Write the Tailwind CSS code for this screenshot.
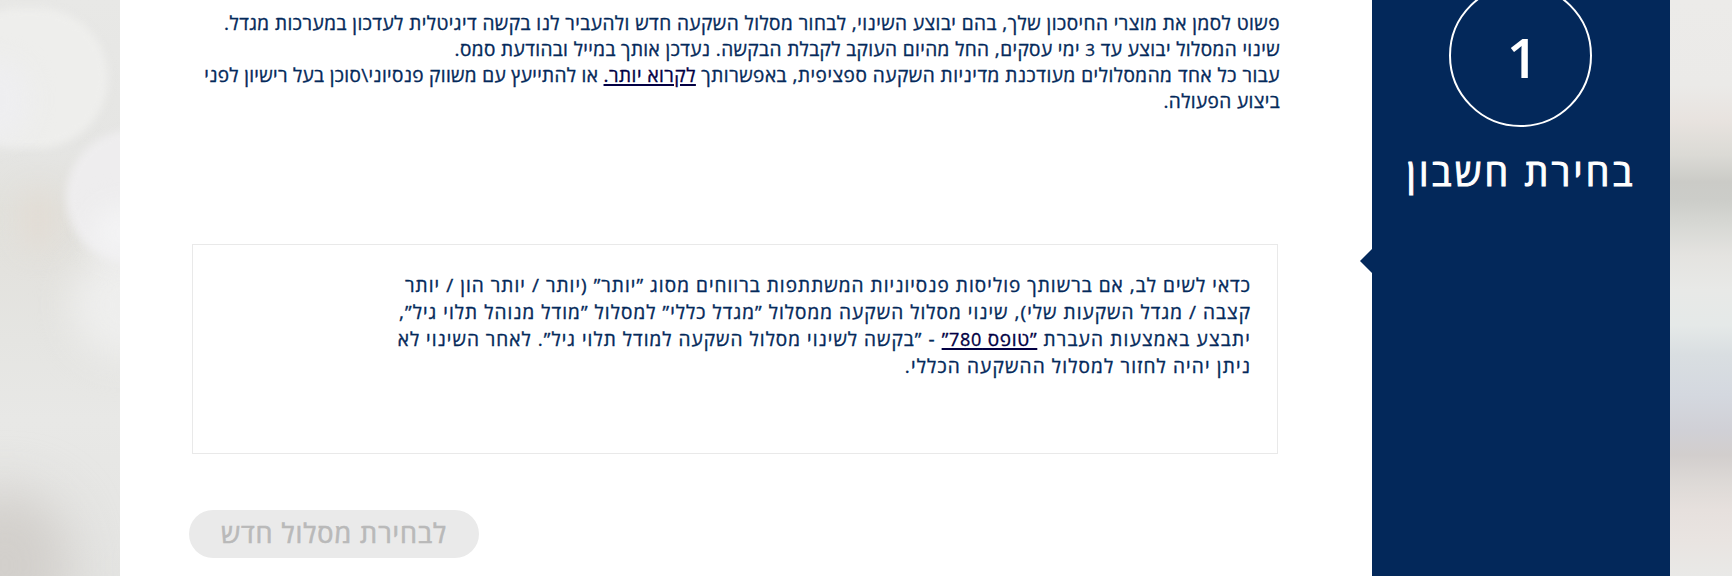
<!doctype html>
<html lang="he" dir="rtl">

<head>
    <meta charset="UTF-8">
    <meta name="viewport" content="width=device-width, initial-scale=1.0">
    <title>בחירת חשבון</title>
    <script src="https://cdn.jsdelivr.net/npm/@tailwindcss/browser@4"></script>
</head>

<body class="h-screen overflow-hidden bg-[#e9e9e7] font-['Open_Sans',sans-serif] text-[#04295a]">
    <div class="flex h-[576px]">
        <!-- right side of the page background -->
        <div class="w-[62px] shrink-0 bg-[linear-gradient(to_bottom,#ecebe9_0px,#ebeae8_85px,#e8e3df_120px,#dbdad5_155px,#cbcbc7_182px,#cccdc9_200px,#d7d8d4_225px,#e4e3e0_255px,#e8e9e7_290px,#e5e9e8_325px,#d9dee1_355px,#d4d8df_395px,#d0d0d6_430px,#d2cecd_455px,#dedad7_485px,#e6e0dd_510px,#e9e4e1_540px,#e9e9e7_576px)]"></div>

        <!-- current step -->
        <aside class="relative flex w-[298px] shrink-0 flex-col items-center bg-[#03285a] text-white">
            <div class="-mt-4 mr-px flex size-[143px] shrink-0 items-center justify-center rounded-full border-2 border-white">
                <span class="pt-0.5 pl-1 text-[55px] leading-none font-semibold">1</span>
            </div>
            <h2 class="mt-[21px] text-[37.5px] leading-[48px] tracking-[3.3px] whitespace-nowrap [-webkit-text-stroke:1px]">בחירת חשבון</h2>
            <svg class="absolute top-[249px] -left-3" width="12" height="24" viewBox="0 0 12 24">
                <path fill="#03285a" d="M12 0L0 12L12 24Z"></path>
            </svg>
        </aside>

        <main class="flex w-[1252px] shrink-0 flex-col bg-white">
            <div class="mt-[10px] mr-[92px] text-[19px] leading-[26px] whitespace-nowrap [-webkit-text-stroke:0.35px]">
                <p class="tracking-[0.47px]">פשוט לסמן את מוצרי החיסכון שלך, בהם יבוצע השינוי, לבחור מסלול השקעה חדש ולהעביר לנו בקשה דיגיטלית לעדכון במערכות מגדל.</p>
                <p class="tracking-[0.41px]">שינוי המסלול יבוצע עד <span class="text-[17px] leading-none">3</span> ימי עסקים, החל מהיום העוקב לקבלת הבקשה. נעדכן אותך במייל ובהודעת סמס.</p>
                <p class="tracking-[0.34px]"><span class="tracking-[0.52px]">עבור כל אחד מהמסלולים מעודכנת מדיניות השקעה ספציפית, באפשרותך </span><a href="#" class="tracking-[0.5px] text-[#020043] underline decoration-2 underline-offset-2">לקרוא יותר.</a> או להתייעץ עם משווק פנסיוני\סוכן בעל רישיון לפני</p>
                <p class="tracking-[0.4px]">ביצוע הפעולה.</p>
            </div>

            <div class="mt-[130px] mr-[94px] h-[210px] w-[1086px] border border-[#e9e9e9] pt-[27px] pr-[26px] text-[19px] leading-[27px] tracking-[1.03px] whitespace-nowrap [-webkit-text-stroke:0.35px]">
                <p class="tracking-[1.05px]">כדאי לשים לב, אם ברשותך פוליסות פנסיוניות המשתתפות ברווחים מסוג ”יותר” (יותר / יותר הון / יותר</p>
                <p class="tracking-[1.05px]">קצבה / מגדל השקעות שלי), שינוי מסלול השקעה ממסלול ”מגדל כללי” למסלול ”מודל מנוהל תלוי גיל”,</p>
                <p class="tracking-[1.04px]"><span class="tracking-[1.22px]">יתבצע באמצעות העברת </span><a href="#" class="tracking-[0.72px] text-[#020043] underline decoration-2 underline-offset-2">”טופס <span class="text-[18px] leading-none">780</span>”</a> - ”בקשה לשינוי מסלול השקעה למודל תלוי גיל”. לאחר השינוי לא</p>
                <p class="tracking-[1.17px]">ניתן יהיה לחזור למסלול ההשקעה הכללי.</p>
            </div>

            <button type="button" disabled class="mt-[56px] mr-[893px] flex h-12 w-[290px] items-center justify-center rounded-full bg-[#eaeaea] pb-0.5 text-[27px] tracking-[0.95px] whitespace-nowrap text-[#b9b9b9] [-webkit-text-stroke:0.6px]">לבחירת מסלול חדש</button>
        </main>

        <!-- left side of the page background -->
        <div class="relative w-[120px] shrink-0 overflow-hidden bg-[linear-gradient(to_bottom,#e8e8e6_0px,#e5e5e3_150px,#e2e1dc_210px,#e3e2de_270px,#e5e5e2_340px,#e8e8e6_420px,#e4e4e2_576px)]">
            <div class="absolute top-[8px] -left-[50px] h-[140px] w-[158px] rounded-full bg-[#eeeeec] blur-[4px]"></div>
            <div class="absolute top-[60px] -left-[40px] h-[80px] w-[70px] rounded-full bg-[#eeeef0] blur-[12px]"></div>
            <div class="absolute top-[190px] left-[22px] h-[60px] w-[32px] rounded-full bg-[#e2dcd4] blur-[14px]"></div>
            <div class="absolute top-[250px] left-[70px] h-[110px] w-[110px] rounded-full bg-[#eeeeed] blur-[18px]"></div>
            <div class="absolute top-[130px] left-[66px] h-[134px] w-[134px] rounded-full bg-[#eeedee] blur-[4px]"></div>
            <div class="absolute top-[205px] left-[92px] h-[56px] w-[60px] rounded-full bg-[#f3f3f4] blur-[14px]"></div>
            <div class="absolute top-[490px] -left-[60px] h-[150px] w-[130px] rounded-full bg-[#d2cfcb] blur-[26px]"></div>
        </div>
    </div>
</body>

</html>
